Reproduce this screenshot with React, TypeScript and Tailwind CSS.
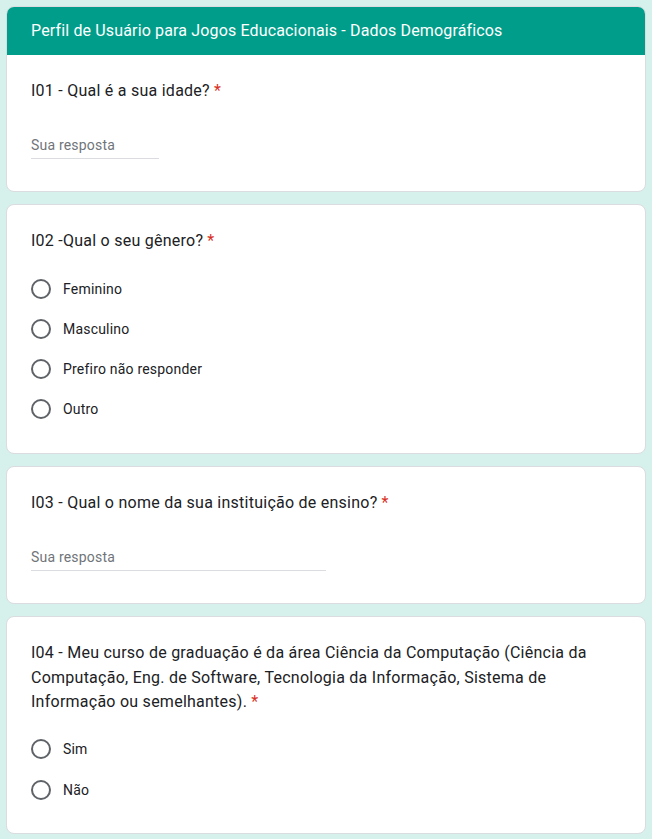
import React from 'react';

const Required = () => <span className="text-[#d93025] ml-1">*</span>;

const Radio: React.FC<{ label: string }> = ({ label }) => (
  <label className="flex items-center h-10">
    <span className="w-5 h-5 rounded-full border-2 border-[#5f6368] shrink-0" />
    <span className="ml-3 text-sm tracking-[0.2px] text-[#202124]">{label}</span>
  </label>
);

const TextAnswer: React.FC<{ width: string }> = ({ width }) => (
  <div
    className={`${width} border-b border-[#dadce0] pb-[3px] mt-8 text-sm tracking-[0.2px] text-[#70757a]`}
  >
    Sua resposta
  </div>
);

const Card: React.FC<{ children: React.ReactNode; className?: string }> = ({ children, className }) => (
  <div className={`bg-white rounded-lg border border-[#dadce0] ${className ?? ''}`}>{children}</div>
);

const Title: React.FC<{ children: React.ReactNode; className?: string }> = ({ children, className }) => (
  <div className={`text-base tracking-[0.25px] text-[#202124] ${className ?? 'leading-6'}`}>
    {children}
    <Required />
  </div>
);

export default function App() {
  return (
    <div
      className="min-h-[839px] bg-[#d6f0ec] px-[6px] pt-[6px] pb-6 flex flex-col gap-3"
      style={{ fontFamily: 'Roboto, "Liberation Sans", sans-serif' }}
    >
      <Card className="overflow-hidden">
        <div className="bg-[#009e8a] h-12 flex items-center px-6 text-white text-base tracking-[0.15px]">
          Perfil de Usuário para Jogos Educacionais - Dados Demográficos
        </div>
        <div className="px-6 pt-6 pb-8">
          <Title>I01 - Qual é a sua idade?</Title>
          <TextAnswer width="w-[128px]" />
        </div>
      </Card>

      <Card className="px-6 pt-6 pb-[3px]">
        <Title className="leading-6 mb-4">I02 -Qual o seu gênero?</Title>
        <Radio label="Feminino" />
        <Radio label="Masculino" />
        <Radio label="Prefiro não responder" />
        <Radio label="Outro" />
        <div className="h-[21px]" />
      </Card>

      <Card className="px-6 pt-6 pb-8">
        <Title>I03 - Qual o nome da sua instituição de ensino?</Title>
        <TextAnswer width="w-[295px]" />
      </Card>

      <Card className="px-6 pt-6 pb-[23px]">
        <Title className="leading-[24.5px] mb-[14px]">
          I04 - Meu curso de graduação é da área Ciência da Computação (Ciência da Computação, Eng. de
          Software, Tecnologia da Informação, Sistema de Informação ou semelhantes).
        </Title>
        <Radio label="Sim" />
        <div className="h-px" />
        <Radio label="Não" />
      </Card>
    </div>
  );
}
